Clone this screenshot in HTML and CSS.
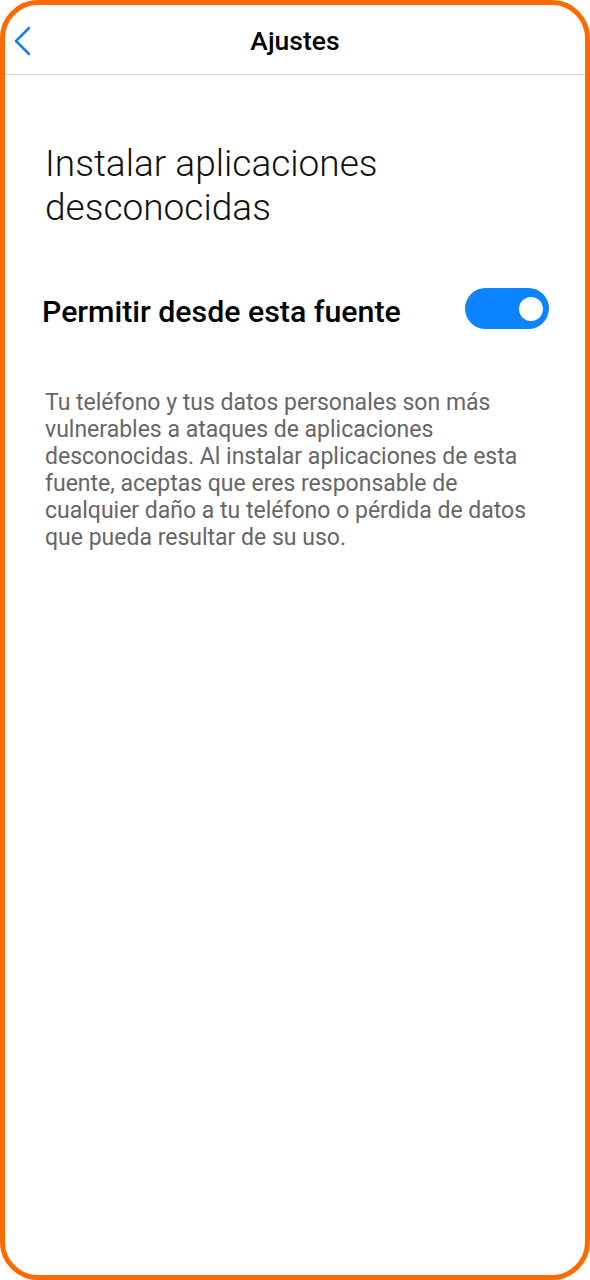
FILE: index.html
```html
<!DOCTYPE html>
<html lang="es">
<head>
<meta charset="utf-8">
<title>Ajustes</title>
<link rel="stylesheet" href="styles.css">
</head>
<body>
<div class="frame">
  <header class="topbar">
    <svg class="back" width="20" height="30" viewBox="0 0 20 30" aria-hidden="true">
      <path d="M16 2 L3 15 L16 28" fill="none" stroke="#1a7ff5" stroke-width="2.6" stroke-linecap="round" stroke-linejoin="round"/>
    </svg>
    <h1 class="topbar-title">Ajustes</h1>
  </header>
  <main class="content">
    <h2 class="page-title">Instalar aplicaciones desconocidas</h2>
    <div class="setting-row">
      <span class="setting-label">Permitir desde esta fuente</span>
      <span class="toggle"><span class="knob"></span></span>
    </div>
    <p class="desc">Tu teléfono y tus datos personales son más vulnerables a ataques de aplicaciones desconocidas. Al instalar aplicaciones de esta fuente, aceptas que eres responsable de cualquier daño a tu teléfono o pérdida de datos que pueda resultar de su uso.</p>
  </main>
</div>
</body>
</html>
```

FILE: styles.css
```css
* { box-sizing: border-box; }
html, body {
  margin: 0;
  padding: 0;
  background: #ffffff;
}
body {
  font-family: Roboto, "Noto Sans", "Liberation Sans", sans-serif;
  width: 590px;
  height: 1280px;
}
.frame {
  width: 590px;
  height: 1280px;
  border: 5px solid #ff6a00;
  border-radius: 38px;
  background: #fff;
  overflow: hidden;
}
.topbar {
  position: relative;
  height: 70px;
  border-bottom: 1.5px solid #dcdcdc;
  display: flex;
  align-items: center;
  justify-content: center;
}
.back {
  position: absolute;
  left: 8px;
  top: 21px;
}
.topbar-title {
  margin: 0;
  font-size: 26.5px;
  font-weight: 500;
  color: #000;
  padding-top: 2px;
}
.content {
  padding: 0 36px 0 40px;
}
.page-title {
  margin: 67px 0 0 0;
  font-size: 37px;
  font-weight: 300;
  line-height: 44px;
  color: #111;
  width: 440px;
}
.setting-row {
  margin-top: 58px;
  display: flex;
  align-items: center;
  justify-content: space-between;
  margin-left: -3px;
}
.setting-label {
  font-size: 30.3px;
  font-weight: 500;
  color: #000;
  margin-top: 6px;
}
.toggle {
  width: 84px;
  height: 41px;
  border-radius: 21px;
  background: #0d84ff;
  display: flex;
  align-items: center;
  justify-content: flex-end;
  padding-right: 6px;
}
.knob {
  width: 24px;
  height: 24px;
  border-radius: 50%;
  background: #fff;
}
.desc {
  margin: 60px 0 0 0;
  font-size: 23px;
  line-height: 27px;
  color: #666;
  width: 494px;
}
```
